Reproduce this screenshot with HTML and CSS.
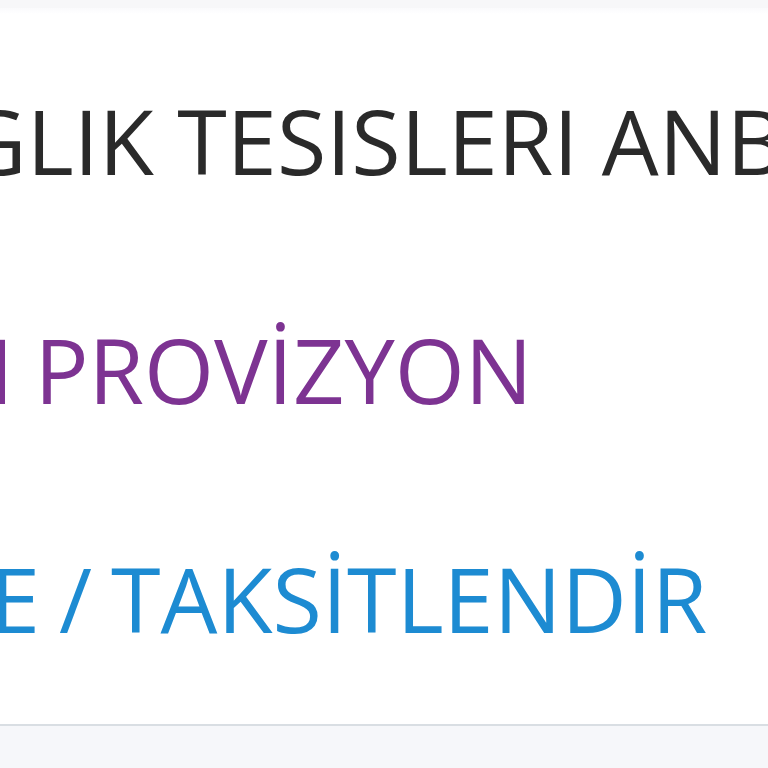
FILE: index.html
```html
<!DOCTYPE html>
<html lang="tr">
<head>
<meta charset="utf-8">
<link rel="stylesheet" href="styles.css">
</head>
<body>
<div class="topbar"></div>
<main class="panel">
  <div class="line line-dark"><span class="txt t1">SAGLIK TESISLERI ANBARI</span></div>
  <div class="line line-purple"><span class="pre pre2">ANLAŞMALI</span> <span class="seg seg2">PROVİZYON</span></div>
  <div class="line line-blue line-flex"><span class="pre pre3">ERTELE</span> <span class="seg sep">/</span> <span class="seg seg3">TAKSİTLENDİR</span></div>
</main>
<div class="footer"></div>
</body>
</html>
```
FILE: styles.css
```css
html, body {
  margin: 0;
  padding: 0;
  background: #f6f7fa;
  overflow: hidden;
  width: 768px;
  height: 768px;
}
.topbar {
  height: 8px;
  background: #f7f7f9;
}
.panel {
  height: 718px;
  background: linear-gradient(#fafafc 0, #ffffff 6px);
  border-bottom: 2px solid #d9dee3;
  box-sizing: border-box;
  padding-top: 18px;
  overflow: hidden;
  font-family: "Open Sans", sans-serif;
  font-weight: 400;
  font-size: 90px;
}
.line {
  height: 229px;
  line-height: 229px;
  white-space: nowrap;
}
.line-flex {
  display: flex;
}
.txt, .pre, .seg { display: inline-block; flex: none; }
.pre { width: 600px; text-align: right; }
.line-dark { color: #2a2a2a; }
.line-purple { color: #7d3392; }
.line-blue { color: #1d8bd2; }
.t1 { margin-left: -145px; }
.pre2 { margin-left: -586px; }
.seg2 { margin-left: -3px; }
.pre3 { margin-left: -560px; }
.sep { width: 71px; text-align: center; }
.footer {
  height: 42px;
  background: #f6f7fa;
}
```
